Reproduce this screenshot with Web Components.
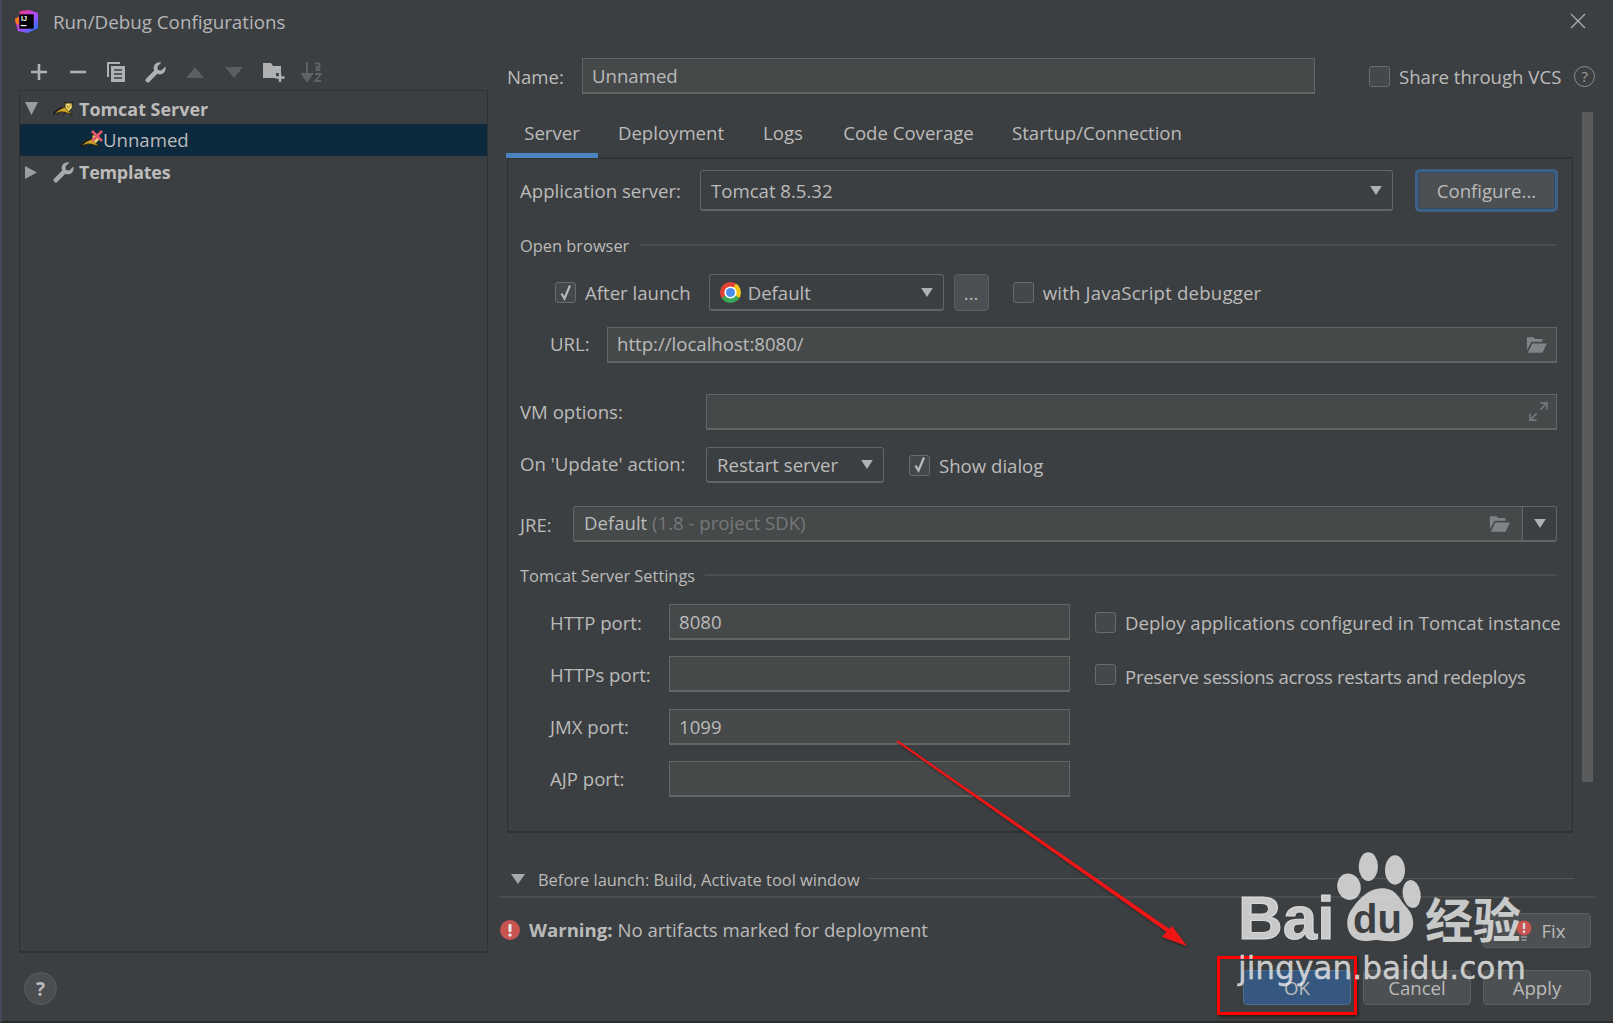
<!DOCTYPE html>
<html><head><meta charset="utf-8">
<style>
html,body{margin:0;padding:0;background:#3c3f41}
body{font-family:"Open Sans","Noto Sans",sans-serif;color:#bbb;font-size:18.6px}
</style></head><body>
<rd-dialog>
  <rd-titlebar slot="title">Run/Debug Configurations</rd-titlebar>

  <rd-col slot="left" style="width:486px;padding-left:17px;box-sizing:border-box">
    <rd-toolbar></rd-toolbar>
    <rd-tree>
      <rd-tree-row bold first arrow="down" icon="tomcat">Tomcat Server</rd-tree-row>
      <rd-tree-row selected icon="tomcat-x"><span style="position:relative;top:-1px">Unnamed</span></rd-tree-row>
      <rd-tree-row bold arrow="right" icon="wrench"><span style="letter-spacing:-.25px;margin-left:-1px">Templates</span></rd-tree-row>
    </rd-tree>
    <rd-help-circle style="margin:19px 0 0 5px"></rd-help-circle>
  </rd-col>

  <rd-col slot="right" style="flex:1;padding-left:19px;box-sizing:border-box;min-width:0">
    <rd-row style="margin-top:14px;height:36px">
      <rd-label w="75">Name:</rd-label>
      <rd-field style="width:733px;height:36px">Unnamed</rd-field>
      <rd-check style="margin-left:54px">Share through VCS</rd-check>
      <rd-q style="margin-left:13px"></rd-q>
    </rd-row>

    <rd-row style="align-items:flex-start;margin-top:18px">
      <rd-col style="width:1066px">
        <rd-tabs>
          <rd-tab active style="width:92px;margin-left:-1px">Server</rd-tab>
          <rd-tab style="width:146px">Deployment</rd-tab>
          <rd-tab style="width:78px">Logs</rd-tab>
          <rd-tab style="width:173px">Code Coverage</rd-tab>
          <rd-tab style="width:204px">Startup/Connection</rd-tab>
        </rd-tabs>
        <rd-panel>
          <rd-row style="margin-top:10px;height:43px">
            <rd-label w="180">Application server:</rd-label>
            <rd-combo style="width:693px;height:41px">Tomcat 8.5.32</rd-combo>
            <rd-button focused style="margin-left:22px;width:143px;height:43px;margin-right:-2px">Configure...</rd-button>
          </rd-row>
          <rd-group style="margin-top:23px">Open browser</rd-group>
          <rd-row style="margin-top:19px;height:37px;padding-left:35px">
            <rd-check checked>After launch</rd-check>
            <rd-combo style="width:235px;height:37px;margin-left:18px"><rd-chrome slot="icon"></rd-chrome>Default</rd-combo>
            <rd-button style="width:35px;height:37px;margin-left:10px">...</rd-button>
            <rd-check style="margin-left:24px"><span style="letter-spacing:.2px">with JavaScript debugger</span></rd-check>
          </rd-row>
          <rd-row style="margin-top:16px;height:36px;padding-left:30px">
            <rd-label w="57" style="padding-bottom:3px">URL:</rd-label>
            <rd-field lift style="flex:1;height:36px">http://localhost:8080/<rd-glyph slot="end" name="folder" style="margin-right:0"></rd-glyph></rd-field>
          </rd-row>
          <rd-row style="margin-top:31px;height:36px">
            <rd-label w="186" style="padding-bottom:2px">VM options:</rd-label>
            <rd-field style="flex:1;height:36px"><rd-glyph slot="end" name="expand" style="margin-right:-1px"></rd-glyph></rd-field>
          </rd-row>
          <rd-row style="margin-top:17px;height:36px">
            <rd-label w="186" style="padding-bottom:3px">On 'Update' action:</rd-label>
            <rd-combo style="width:178px;height:36px">Restart server</rd-combo>
            <rd-check checked style="margin-left:25px">Show dialog</rd-check>
          </rd-row>
          <rd-row style="margin-top:23px;height:36px">
            <rd-label w="53">JRE:</rd-label>
            <rd-jre style="flex:1;height:36px">Default <span style="color:#787878">(1.8 - project SDK)</span></rd-jre>
          </rd-row>
          <rd-group style="margin-top:23px">Tomcat Server Settings</rd-group>
          <rd-ports style="margin-top:19px">
            <rd-label>HTTP port:</rd-label>
            <rd-field style="height:36px">8080</rd-field>
            <rd-check>Deploy applications configured in Tomcat instance</rd-check>
            <rd-label>HTTPs port:</rd-label>
            <rd-field style="height:36px"></rd-field>
            <rd-check><span style="letter-spacing:-.29px;position:relative;top:2px">Preserve sessions across restarts and redeploys</span></rd-check>
            <rd-label>JMX port:</rd-label>
            <rd-field style="height:36px">1099</rd-field>
            <span></span>
            <rd-label>AJP port:</rd-label>
            <rd-field style="height:36px"></rd-field>
            <span></span>
          </rd-ports>
        </rd-panel>
      </rd-col>
      <rd-scrollbar></rd-scrollbar>
    </rd-row>

    <rd-before style="margin-top:34px">Before launch: Build, Activate tool window</rd-before>
    <rd-sep></rd-sep>
    <rd-row style="margin:15px 0 0 -7px;height:35px;width:1091px">
      <rd-warning><b>Warning:</b> No artifacts marked for deployment</rd-warning>
      <span style="flex:1"></span>
      <rd-button style="width:108px;height:35px;padding-left:33px"><rd-bulb slot="icon"></rd-bulb>Fix</rd-button>
    </rd-row>
    <rd-row style="margin:22px 0 0 0;height:35px;width:1084px;justify-content:flex-end;gap:12px">
      <rd-button primary style="width:108px;height:35px">OK</rd-button>
      <rd-button style="width:108px;height:35px">Cancel</rd-button>
      <rd-button style="width:108px;height:35px">Apply</rd-button>
    </rd-row>
  </rd-col>

  <rd-annotations slot="overlay"></rd-annotations>
  <rd-watermark slot="overlay"></rd-watermark>
</rd-dialog>

<script>
const def=(name,css,html,extra)=>customElements.define(name,class extends HTMLElement{
  constructor(){super();const r=this.attachShadow({mode:'open'});
    r.innerHTML=`<style>${css}</style>${typeof html==='function'?html(this):html}`;}
  connectedCallback(){extra&&extra(this)}
});
const chk=`<svg width="21" height="21" viewBox="0 0 21 21" fill="none"><path d="M6.5 11.5 L9.5 16.5 L15 3.5" stroke="#b8b8b8" stroke-width="2.2"/></svg>`;
const tomcat=`<svg width="20" height="15" viewBox="0 0 60 44"><path d="M0 43C4 31 14 24 28 19" stroke="#1e1b18" stroke-width="4" fill="none"/><path d="M36 10 35 0 45 5M59 10 60 0 50 5" fill="#1e1b18"/><path d="M6 38C13 27 24 23 35 18L46 28 59 41C50 36 42 36 36 33 26 31 16 33 6 38Z" fill="#d2a322" stroke="#2a2410" stroke-width="2"/><path d="M37 6H57V20L47 31 37 20Z" fill="#f0d878" stroke="#4a3c10" stroke-width="1.6"/><path d="M42 12 46 21 53 9" stroke="#94720f" stroke-width="2.2" fill="none"/><path d="M24 31 12 43M36 33 30 44M50 35 58 44" stroke="#1e1b18" stroke-width="3" fill="none"/></svg>`;
const wrench=(w=20,c="#a7a9ab")=>`<svg width="${w}" height="${w}" viewBox="0 0 20 20"><path d="M19.4 4.2 15.6 8 12.2 7.6 11.8 4.2 15.6 .5C12.8-.2 9.6 1 8.6 3.8 8 5.4 8.2 7 8.8 8.2L1 16a2 2 0 0 0 0 2.6l.4.4a2 2 0 0 0 2.6 0L11.8 11.2C13 11.8 14.6 12 16.2 11.4 19 10.4 20.2 7 19.4 4.2Z" fill="${c}"/></svg>`;
const folder=`<svg width="21" height="17" viewBox="0 0 23 18"><path d="M1 15V1H8L10 3H18V6H6Z" fill="#7f8587"/><path d="M7 8H23L18 18H2Z" fill="#7f8587"/></svg>`;
const tri=`<svg class="tri" width="12" height="9" viewBox="0 0 13 10"><path d="M0 0H13L6.5 10Z" fill="#afb1b3"/></svg>`;

def('rd-dialog',`:host{display:flex;flex-direction:column;position:relative;width:1613px;height:1023px;box-sizing:border-box;border-left:2px solid #48485a;border-bottom:2px solid #2b2b2b;background:#3c3f41;overflow:hidden}
.main{display:flex;flex:1;min-height:0}`,`<slot name="title"></slot><div class="main"><slot name="left"></slot><slot name="right"></slot></div><slot name="overlay"></slot>`);

def('rd-titlebar',`:host{display:flex;align-items:center;height:43px;margin-bottom:1px;padding-left:13px;font-size:18.8px;color:#b4b6b8;flex:none}
svg.logo{margin-right:15px;flex:none}.x{margin-left:auto;margin-right:27px;margin-top:-2px}`,
`<svg class="logo" width="23" height="23" viewBox="0 0 24 24"><defs><linearGradient id="g" x1="0" y1="0" x2="1" y2="1"><stop offset="0" stop-color="#fe315d"/><stop offset=".5" stop-color="#b74af7"/><stop offset="1" stop-color="#087cfa"/></linearGradient></defs><path d="M0 10 4 7 5 1 15 0 24 3 24 19 13 24 3 22 1 14Z" fill="url(#g)"/><path d="M0 9 4 7 4 15 1 14Z" fill="#f97a12"/><rect x="4.5" y="4.5" width="15" height="15" fill="#000"/><text x="6.2" y="11.6" font-family="Liberation Sans" font-weight="700" font-size="7.6" fill="#fff">IJ</text><rect x="6" y="15.6" width="6" height="1.3" fill="#fff"/></svg><slot></slot>
<svg class="x" width="16" height="16" viewBox="0 0 16 16"><path d="M1 1 15 15M15 1 1 15" stroke="#a9abad" stroke-width="1.4"/></svg>`);

def('rd-col',`:host{display:flex;flex-direction:column}`,`<slot></slot>`);
def('rd-row',`:host{display:flex;align-items:center;flex:none}`,`<slot></slot>`);
def('rd-label',`:host{display:block;flex:none;white-space:nowrap}`,`<slot></slot>`,el=>{if(el.getAttribute('w'))el.style.width=el.getAttribute('w')+'px'});

def('rd-toolbar',`:host{display:flex;align-items:center;height:36px;margin-top:10px;flex:none}
i{display:flex;width:39px;justify-content:center;align-items:center;height:36px}`,
`<i><svg width="16" height="16" viewBox="0 0 16 16"><path d="M8 0V16M0 8H16" stroke="#afb1b3" stroke-width="2.6"/></svg></i>
<i><svg width="16" height="16" viewBox="0 0 16 16"><path d="M0 8H16" stroke="#afb1b3" stroke-width="2.6"/></svg></i>
<i><svg width="19" height="21" viewBox="0 0 19 21"><path d="M1 15V1H13" fill="none" stroke="#afb1b3" stroke-width="2"/><path d="M4 4H18V20H4Z" fill="#afb1b3"/><path d="M7 8H15M7 12H15M7 16H15" stroke="#3c3f41" stroke-width="1.6"/></svg></i>
<i>${wrench(21,'#afb1b3')}</i>
<i><svg width="18" height="11" viewBox="0 0 18 11"><path d="M9 0 18 11H0Z" fill="#5c5f61"/></svg></i>
<i><svg width="18" height="11" viewBox="0 0 18 11"><path d="M0 0H18L9 11Z" fill="#5c5f61"/></svg></i>
<i style="padding-left:3px;box-sizing:border-box"><svg width="22" height="20" viewBox="0 0 22 20"><path d="M0 1H8L10 4H18V11H13V16H0Z" fill="#afb1b3"/><path d="M17 11V20M12.5 15.5H21.5" stroke="#afb1b3" stroke-width="2.4"/></svg></i>
<i><svg width="21" height="22" viewBox="0 0 21 22"><path d="M6 1V18M1 13 6 20 11 13Z" stroke="#5f6264" stroke-width="2" fill="#5f6264"/><path d="M14 2.5H18.5V9M19 6H15.5V9H19M14 13H20L14 20H20" stroke="#5f6264" stroke-width="1.8" fill="none"/></svg></i>`);

def('rd-tree',`:host{display:block;height:863px;width:469px;box-sizing:border-box;flex:none;border:1px solid #323232;border-bottom:2px solid #323232}`,`<slot></slot>`);

def('rd-tree-row',`:host{display:flex;align-items:center;height:32px;padding-left:5px;white-space:nowrap}
:host([first]){height:33px;padding-top:2px;box-sizing:border-box}
:host([selected]){background:#0d293e;padding-left:0}
:host([bold]){font-weight:700;font-size:17.95px}
.a{width:13px;height:13px;margin-right:15px;flex:none}.i{display:flex;margin-right:6px;flex:none;position:relative}
:host([selected]) .a{width:60px;margin:0}:host([selected]) .i{margin-right:3px}
.xx{position:absolute;right:-3px;top:-3px}`,
el=>{const a=el.getAttribute('arrow'),ic=el.getAttribute('icon');
 let arrow=a==='down'?`<svg class="a" viewBox="0 0 13 13"><path d="M0 0H13L6.5 13Z" fill="#9a9c9e"/></svg>`:a==='right'?`<svg class="a" viewBox="0 0 13 13"><path d="M0 0 12 6.5 0 13Z" fill="#9a9c9e"/></svg>`:`<span class="a"></span>`;
 let icon=ic==='wrench'?wrench(21):ic==='tomcat'?tomcat:tomcat+`<svg class="xx" width="12" height="12" viewBox="0 0 12 12"><path d="M1 1 11 11M11 1 1 11" stroke="#e05c6d" stroke-width="2.6"/></svg>`;
 return `${arrow}<span class="i">${icon}</span><slot></slot>`;});

def('rd-help-circle',`:host{display:flex;width:33px;height:33px;box-sizing:border-box;border-radius:50%;background:#4b4e50;border:1px solid #5a5d5f;align-items:center;justify-content:center;font-weight:700;font-size:19px;color:#b8babc;flex:none}`,`?`);

def('rd-field',`:host{display:flex;align-items:center;box-sizing:border-box;background:#45494a;border:1px solid #646464;border-bottom:2px solid #646464;padding:0 9px;min-width:0;white-space:nowrap}
.e{margin-left:auto;display:flex}
:host([lift]) .v{margin-top:-3px}`,`<span class="v"><slot></slot></span><span class="e"><slot name="end"></slot></span>`);
def('rd-glyph',`:host{display:flex}`,el=>el.getAttribute('name')==='folder'?folder:
 `<svg width="19" height="19" viewBox="0 0 20 20" fill="none"><path d="M12 1H19V8M19 1 12 8" stroke="#72777a" stroke-width="1.8"/><path d="M8 19H1V12M1 19 8 12" stroke="#72777a" stroke-width="1.8"/></svg>`);

def('rd-check',`:host{display:inline-flex;align-items:center;white-space:nowrap;flex:none}
.b{width:21px;height:21px;box-sizing:border-box;background:#43494a;border:1.5px solid #6b6b6b;border-radius:3px;margin-right:9px;flex:none;display:flex;position:relative}
svg{position:absolute;left:-1.5px;top:-1.5px}`,
el=>`<span class="b">${el.hasAttribute('checked')?chk:''}</span><slot></slot>`);
def('rd-q',`:host{display:flex;align-items:center;justify-content:center;width:21px;height:21px;box-sizing:border-box;border:1.5px solid #8a8c8e;border-radius:50%;font-size:15px;color:#9a9c9e;flex:none}`,`?`);

def('rd-tabs',`:host{display:flex;height:46px;flex:none;align-items:stretch}`,`<slot></slot>`);
def('rd-tab',`:host{display:flex;align-items:center;justify-content:center;box-sizing:border-box;padding-bottom:6px;flex:none;position:relative;white-space:nowrap}
:host([active]) {box-shadow:inset 0 -5px 0 #4a83c0}`,`<slot></slot>`);
def('rd-panel',`:host{display:block;box-sizing:border-box;height:676px;width:1066px;border:1px solid #323232;border-top:2px solid #323232;border-bottom:2px solid #323232;padding:0 15px 0 12px;margin-top:-1px;flex:none}`,`<slot></slot>`);
def('rd-scrollbar',`:host{display:block;width:11px;height:670px;background:#595b5d;flex:none;margin-left:9px;margin-right:-2px}`,``);

def('rd-combo',`:host{display:flex;align-items:center;box-sizing:border-box;border:1px solid #646464;border-bottom:2px solid #646464;border-radius:3px;padding:0 10px;background:#3c3f41;white-space:nowrap;flex:none}
.tri{margin-left:auto}::slotted([slot=icon]){margin-right:7px}`,`<slot name="icon"></slot><slot></slot>${tri}`);
def('rd-chrome',`:host{display:block;width:21px;height:21px;border-radius:50%;background:conic-gradient(from 90deg,#f5c518 0 30deg,#3aa757 30deg 150deg,#e34133 150deg 300deg,#f5c518 300deg 360deg);position:relative;flex:none}
i{position:absolute;left:6px;top:6px;width:9px;height:9px;border-radius:50%;background:#4b8cf0;box-shadow:0 0 0 1.6px #fff}`,`<i></i>`);

def('rd-button',`:host{display:flex;align-items:center;justify-content:center;box-sizing:border-box;background:#4c5052;border:1px solid #5e6060;border-radius:4px;flex:none;white-space:nowrap;position:relative}
:host([primary]){background:#365880;border-color:#4c708c}
:host([focused]){border:3px solid #3d6185;border-radius:5px;background:#4c5052;box-shadow:inset 0 0 0 1px #2e4c68}
::slotted([slot=icon]){position:absolute;left:31px;top:6px}`,`<slot name="icon"></slot><slot></slot>`);
def('rd-bulb',`:host{display:block;width:18px;height:24px}`,`<svg width="18" height="24" viewBox="0 0 18 24"><circle cx="9" cy="8" r="7.5" fill="#c75450"/><rect x="7.8" y="3" width="2.4" height="6" fill="#dcdcdc"/><rect x="7.8" y="10.5" width="2.4" height="2.4" fill="#dcdcdc"/><path d="M6 17H12M6.5 20H11.5" stroke="#9a9c9e" stroke-width="1.4"/></svg>`);

def('rd-group',`:host{display:flex;align-items:center;height:20px;font-size:16.4px;white-space:nowrap;flex:none}
i{flex:1;height:2px;background:#4b4d4f;margin-left:10px;margin-top:0}`,`<slot></slot><i></i>`);

def('rd-jre',`:host{display:flex;align-items:center;box-sizing:border-box;background:#45494a;border:1px solid #646464;border-bottom:2px solid #646464;border-radius:3px;white-space:nowrap;flex:none;min-width:0}
.txt{padding-left:10px;flex:1;margin-top:-2px}.f{display:flex;margin-right:12px}
.d{display:flex;align-items:center;justify-content:center;width:33px;height:100%;background:#3c3f41;border-left:1px solid #646464;border-radius:0 3px 3px 0}`,
`<span class="txt"><slot></slot></span><span class="f">${folder}</span><span class="d">${tri}</span>`);

def('rd-ports',`:host{display:grid;grid-template-columns:119px 401px auto;grid-auto-rows:36px;row-gap:16.34px;align-items:center;padding-left:30px}
::slotted(rd-check){margin-left:25px}`,`<slot></slot>`);

def('rd-before',`:host{display:flex;align-items:center;height:24px;padding-left:4px;font-size:16.45px;white-space:nowrap;width:1063px;flex:none}
svg{margin-right:13px;flex:none}i{flex:1;height:1px;background:#55585a;margin-left:9px;margin-top:-2px}`,
`<svg width="14" height="10" viewBox="0 0 14 10"><path d="M0 0H14L7 10Z" fill="#a7a9ab"/></svg><slot></slot><i></i>`);
def('rd-sep',`:host{display:block;height:2px;background:#4b4d4f;margin:5px 0 0 -8px;width:1096px;flex:none}`,``);
def('rd-warning',`:host{display:flex;align-items:center;white-space:nowrap;margin-top:-2px}
svg{margin-right:9px;flex:none}div{white-space:pre}`,`<svg width="20" height="20" viewBox="0 0 20 20"><circle cx="10" cy="10" r="10" fill="#c75450"/><rect x="8.5" y="4" width="3" height="8" rx=".8" fill="#e8e8e8"/><rect x="8.5" y="13.5" width="3" height="3" rx=".8" fill="#e8e8e8"/></svg><div><slot></slot></div>`);

def('rd-annotations',`:host{display:block;position:absolute;left:-2px;top:0;width:1613px;height:1023px;pointer-events:none}
.r{position:absolute;left:1217px;top:956px;width:140px;height:59px;box-sizing:border-box;border:3.5px solid #f00;box-shadow:1px 2px 3px rgba(0,0,0,.55)}
svg{position:absolute;left:0;top:0}`,
`<svg width="1613" height="1023"><defs><filter id="s"><feDropShadow dx="1" dy="1.5" stdDeviation="1.2" flood-color="#000" flood-opacity=".5"/></filter></defs><g filter="url(#s)"><path d="M896 741.5 898 740.5 1174.5 932.5 1172.5 936Z" fill="#ef1515"/><path d="M1187 946 1162 937 1172 926Z" fill="#ef1515"/></g></svg><div class="r"></div>`);

def('rd-watermark',`:host{display:block;position:absolute;left:1148px;top:820px;width:463px;height:203px;pointer-events:none;color:rgba(232,232,232,.82)}
svg{position:absolute;left:0;top:0}
span{position:absolute;line-height:1;white-space:nowrap}
.bai{font:700 62px/1 "Liberation Sans",sans-serif;left:88px;top:67px;-webkit-text-stroke:1px rgba(232,232,232,.82)}
.du{font:700 40px/1 "Liberation Sans",sans-serif;left:203px;top:79px;color:#3c3f41}
.cn{font:700 48px/48px "Noto Sans CJK SC",sans-serif;left:275px;top:73px}
.url{font:400 31.2px/1 "DejaVu Sans",sans-serif;left:88px;top:133px;-webkit-text-stroke:.3px rgba(232,232,232,.82)}`,
`<svg width="463" height="203" viewBox="0 0 1389 609" fill="rgba(232,232,232,.82)"><ellipse cx="655" cy="140" rx="29" ry="43"/><ellipse cx="735" cy="150" rx="30" ry="44" /><ellipse cx="597" cy="200" rx="35" ry="40" transform="rotate(-15 597 200)"/><ellipse cx="785" cy="222" rx="27" ry="42" transform="rotate(-8 785 222)"/><path d="M695 205C740 205 745 235 770 262 800 295 800 350 740 362 700 368 690 355 660 362 600 372 580 320 598 280 615 250 650 205 695 205Z"/></svg>
<span class="bai">Bai</span><span class="du">du</span><span class="cn">经验</span><span class="url">jingyan.baidu.com</span>`);
</script>
</body></html>
